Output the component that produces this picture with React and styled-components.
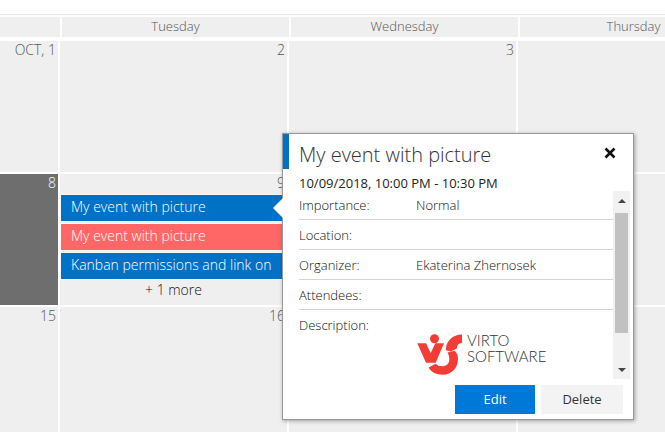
import React from "react";
import styled, { createGlobalStyle } from "styled-components";

const GlobalStyle = createGlobalStyle`
  * { box-sizing: border-box; }
  body {
    margin: 0;
    background: #fff;
    font-family: "Open Sans", sans-serif;
    font-weight: 300;
    color: #444;
    overflow: hidden;
  }
`;

const Page = styled.main`
  position: relative;
  min-height: 100vh;
  overflow: hidden;
  padding-top: 14px;
`;

const Calendar = styled.table`
  display: block;
  border-top: 1px solid #eaeaea;
  padding-top: 2px;
`;

const Head = styled.thead`
  display: block;
`;

const HeadRow = styled.tr`
  display: grid;
  grid-template-columns: 60px repeat(3, minmax(0, 1fr));
  gap: 2px;
  width: calc(100% + 82px);
  height: 20px;
`;

const DayName = styled.th`
  background: #efefef;
  padding: 0;
  color: #555;
  font-size: 13px;
  font-weight: 300;
  line-height: 19px;
  text-align: center;
`;

const Weeks = styled.tbody`
  display: grid;
  gap: 2px;
  padding-top: 4px;
`;

const Week = styled.tr`
  display: grid;
  grid-template-columns: 58px repeat(3, minmax(0, 1fr));
  gap: 2px;
  width: calc(100% + 80px);
  height: 131px;
`;

const Day = styled.td`
  display: flex;
  flex-direction: column;
  padding: 0 1px;
  background: ${(p) => (p.$today ? "#6e6e6e" : "#efefef")};
  color: ${(p) => (p.$today ? "#fff" : "#555")};
`;

const DayNumber = styled.span`
  padding: 0 1px;
  font-size: 14px;
  line-height: 18px;
  text-align: right;
  margin-bottom: 3px;
`;

const EventButton = styled.button`
  flex: none;
  height: 26px;
  margin: 0 0 3px;
  padding: 0 10px 2px;
  border: 0;
  background: ${(p) => p.$color};
  box-shadow: 0 0 0 1px #f8f8f8;
  color: #fff;
  font: 300 14px/24px "Open Sans", sans-serif;
  text-align: left;
  white-space: nowrap;
  overflow: hidden;
`;

const MoreLink = styled.a`
  color: #111;
  font-size: 14px;
  line-height: 16px;
  text-align: center;
  text-decoration: none;
`;

const Popup = styled.section`
  position: absolute;
  top: 133px;
  left: 282px;
  width: 352px;
  display: flex;
  flex-direction: column;
  padding-bottom: 5px;
  background: #fff;
  border: 1px solid #999;
  box-shadow: 1px 1px 4px rgba(0, 0, 0, 0.35);
`;

const Pointer = styled.span`
  position: absolute;
  top: 64px;
  left: -10px;
  border: 10px solid transparent;
  border-left: 0;
  border-right-color: #fff;
`;

const PopupHeader = styled.header`
  display: flex;
  align-items: center;
  height: 35px;
  padding: 0 17px 0 10px;
  border-left: 6px solid #0072c6;
`;

const Title = styled.h2`
  flex: 1;
  margin: 0;
  padding-top: 6px;
  color: #333;
  font-size: 20px;
  line-height: 30px;
  font-weight: 300;
`;

const CloseButton = styled.button`
  display: flex;
  padding: 0;
  border: 0;
  background: none;
  color: #111;
  margin-top: 3px;
`;

const EventTime = styled.p`
  margin: 6px 16px 0;
  color: #222;
  font-size: 13px;
  line-height: 16px;
  font-weight: 500;
`;

const ScrollArea = styled.div`
  display: flex;
  height: 188px;
  margin: 0 3px 0 16px;
`;

const Details = styled.dl`
  flex: 1;
  margin: 0;
  overflow: hidden;
`;

const Detail = styled.div`
  display: grid;
  grid-template-columns: 117px 1fr;
  min-height: ${(p) => (p.$first ? "29px" : "30px")};
  padding-top: ${(p) => (p.$first ? "5px" : "6px")};
  border-bottom: ${(p) => (p.$last ? "0" : "1px solid #d4d4d4")};
  font-size: 13px;
  line-height: 19px;
`;

const Label = styled.dt`
  color: #111;
`;

const Value = styled.dd`
  margin: 0;
  color: #111;
`;

const Logo = styled.svg`
  display: block;
  margin-top: 16px;
`;

const Scrollbar = styled.div`
  display: flex;
  flex-direction: column;
  align-items: center;
  width: 17px;
  background: #f1f1f1;
`;

const ScrollButton = styled.button`
  display: flex;
  align-items: center;
  justify-content: center;
  width: 17px;
  height: 19px;
  padding: 0;
  border: 0;
  background: none;
  color: #444;
`;

const Thumb = styled.div`
  width: 13px;
  height: 120px;
  margin: 3px 0 auto;
  background: #c1c1c1;
`;

const Actions = styled.footer`
  display: flex;
  justify-content: flex-end;
  gap: 6px;
  padding: 6px 10px 0;
`;

const ActionButton = styled.button`
  width: ${(p) => (p.$primary ? "80px" : "82px")};
  height: 29px;
  padding: 0;
  border: 0;
  background: ${(p) => (p.$primary ? "#0078d7" : "#f3f3f3")};
  color: ${(p) => (p.$primary ? "#fff" : "#333")};
  font: ${(p) => (p.$primary ? 500 : 400)} 13px/29px "Open Sans", sans-serif;
`;

const dayNames = ["", "Tuesday", "Wednesday", "Thursday"];

const weeks = [
  [{ label: "OCT, 1" }, { label: "2" }, { label: "3" }, {}],
  [
    { label: "8", today: true },
    {
      label: "9",
      events: [
        { name: "My event with picture", color: "#0072c6" },
        { name: "My event with picture", color: "#ff6767" },
        { name: "Kanban permissions and link on", color: "#0072c6" },
      ],
      more: "+ 1 more",
    },
    {},
    {},
  ],
  [{ label: "15" }, { label: "16" }, {}, {}],
];

function VirtoLogo() {
  return (
    <Logo width="140" height="44" viewBox="416 332 140 44" role="img" aria-label="Virto Software">
      <g fill="#f23c36">
        <circle cx="434.5" cy="338.7" r="4.5" />
        <path d="M417.3 343.3H426L430.7 353L435.3 343.3H444L435.7 362.7H426Z" />
        <path d="M462 334.6V343C458.5 343.2 457 345 456.8 348.5L451 351.5L445.8 350.3C446 341 452.5 334.8 462 334.6Z" />
        <path d="M447.5 352.5L454.5 350.8C456.8 352.5 458 355 458 359C458 368 451.5 374.7 443 374.7C436.5 374.7 431.5 372.5 428.6 367.6L435.5 363.8C437.5 365.5 439.5 366.3 442 366.3C446.5 366.3 449.3 363.5 449.3 359.5C449.3 356.5 448.6 354.5 447.5 352.5Z" />
      </g>
      <g fill="#333" fontFamily="Lato, sans-serif" fontWeight="300" fontSize="15">
        <text x="467" y="346">VIRTO</text>
        <text x="467" y="362">SOFTWARE</text>
      </g>
    </Logo>
  );
}

const details = [
  { label: "Importance:", value: "Normal" },
  { label: "Location:", value: "" },
  { label: "Organizer:", value: "Ekaterina Zhernosek" },
  { label: "Attendees:", value: "" },
  { label: "Description:", value: <VirtoLogo /> },
];

function EventPopup() {
  return (
    <Popup role="dialog" aria-labelledby="event-title">
      <Pointer />
      <PopupHeader>
        <Title id="event-title">My event with picture</Title>
        <CloseButton aria-label="Close">
          <svg width="12" height="12" viewBox="0 0 12 12" stroke="currentColor" strokeWidth="2.6">
            <path d="M1.5 1.5L10.5 10.5M10.5 1.5L1.5 10.5" />
          </svg>
        </CloseButton>
      </PopupHeader>
      <EventTime>10/09/2018, 10:00 PM - 10:30 PM</EventTime>
      <ScrollArea>
        <Details>
          {details.map((d, i) => (
            <Detail key={d.label} $first={i === 0} $last={i === details.length - 1}>
              <Label>{d.label}</Label>
              <Value>{d.value}</Value>
            </Detail>
          ))}
        </Details>
        <Scrollbar>
          <ScrollButton aria-label="Scroll up">
            <svg width="8" height="4" viewBox="0 0 8 4" fill="currentColor"><path d="M0 4L4 0L8 4Z" /></svg>
          </ScrollButton>
          <Thumb />
          <ScrollButton aria-label="Scroll down">
            <svg width="8" height="4" viewBox="0 0 8 4" fill="currentColor"><path d="M0 0L4 4L8 0Z" /></svg>
          </ScrollButton>
        </Scrollbar>
      </ScrollArea>
      <Actions>
        <ActionButton $primary>Edit</ActionButton>
        <ActionButton>Delete</ActionButton>
      </Actions>
    </Popup>
  );
}

export default function App() {
  return (
    <Page>
      <GlobalStyle />
      <Calendar>
        <Head>
          <HeadRow>
            {dayNames.map((name) => (
              <DayName key={name}>{name}</DayName>
            ))}
          </HeadRow>
        </Head>
        <Weeks>
          {weeks.map((week) => (
            <Week key={week[0].label}>
              {week.map((day, column) => (
                <Day key={column} $today={day.today}>
                  {day.label && <DayNumber>{day.label}</DayNumber>}
                  {day.events?.map((e, i) => (
                    <EventButton key={i} $color={e.color}>{e.name}</EventButton>
                  ))}
                  {day.more && <MoreLink href="#more">{day.more}</MoreLink>}
                </Day>
              ))}
            </Week>
          ))}
        </Weeks>
      </Calendar>
      <EventPopup />
    </Page>
  );
}
